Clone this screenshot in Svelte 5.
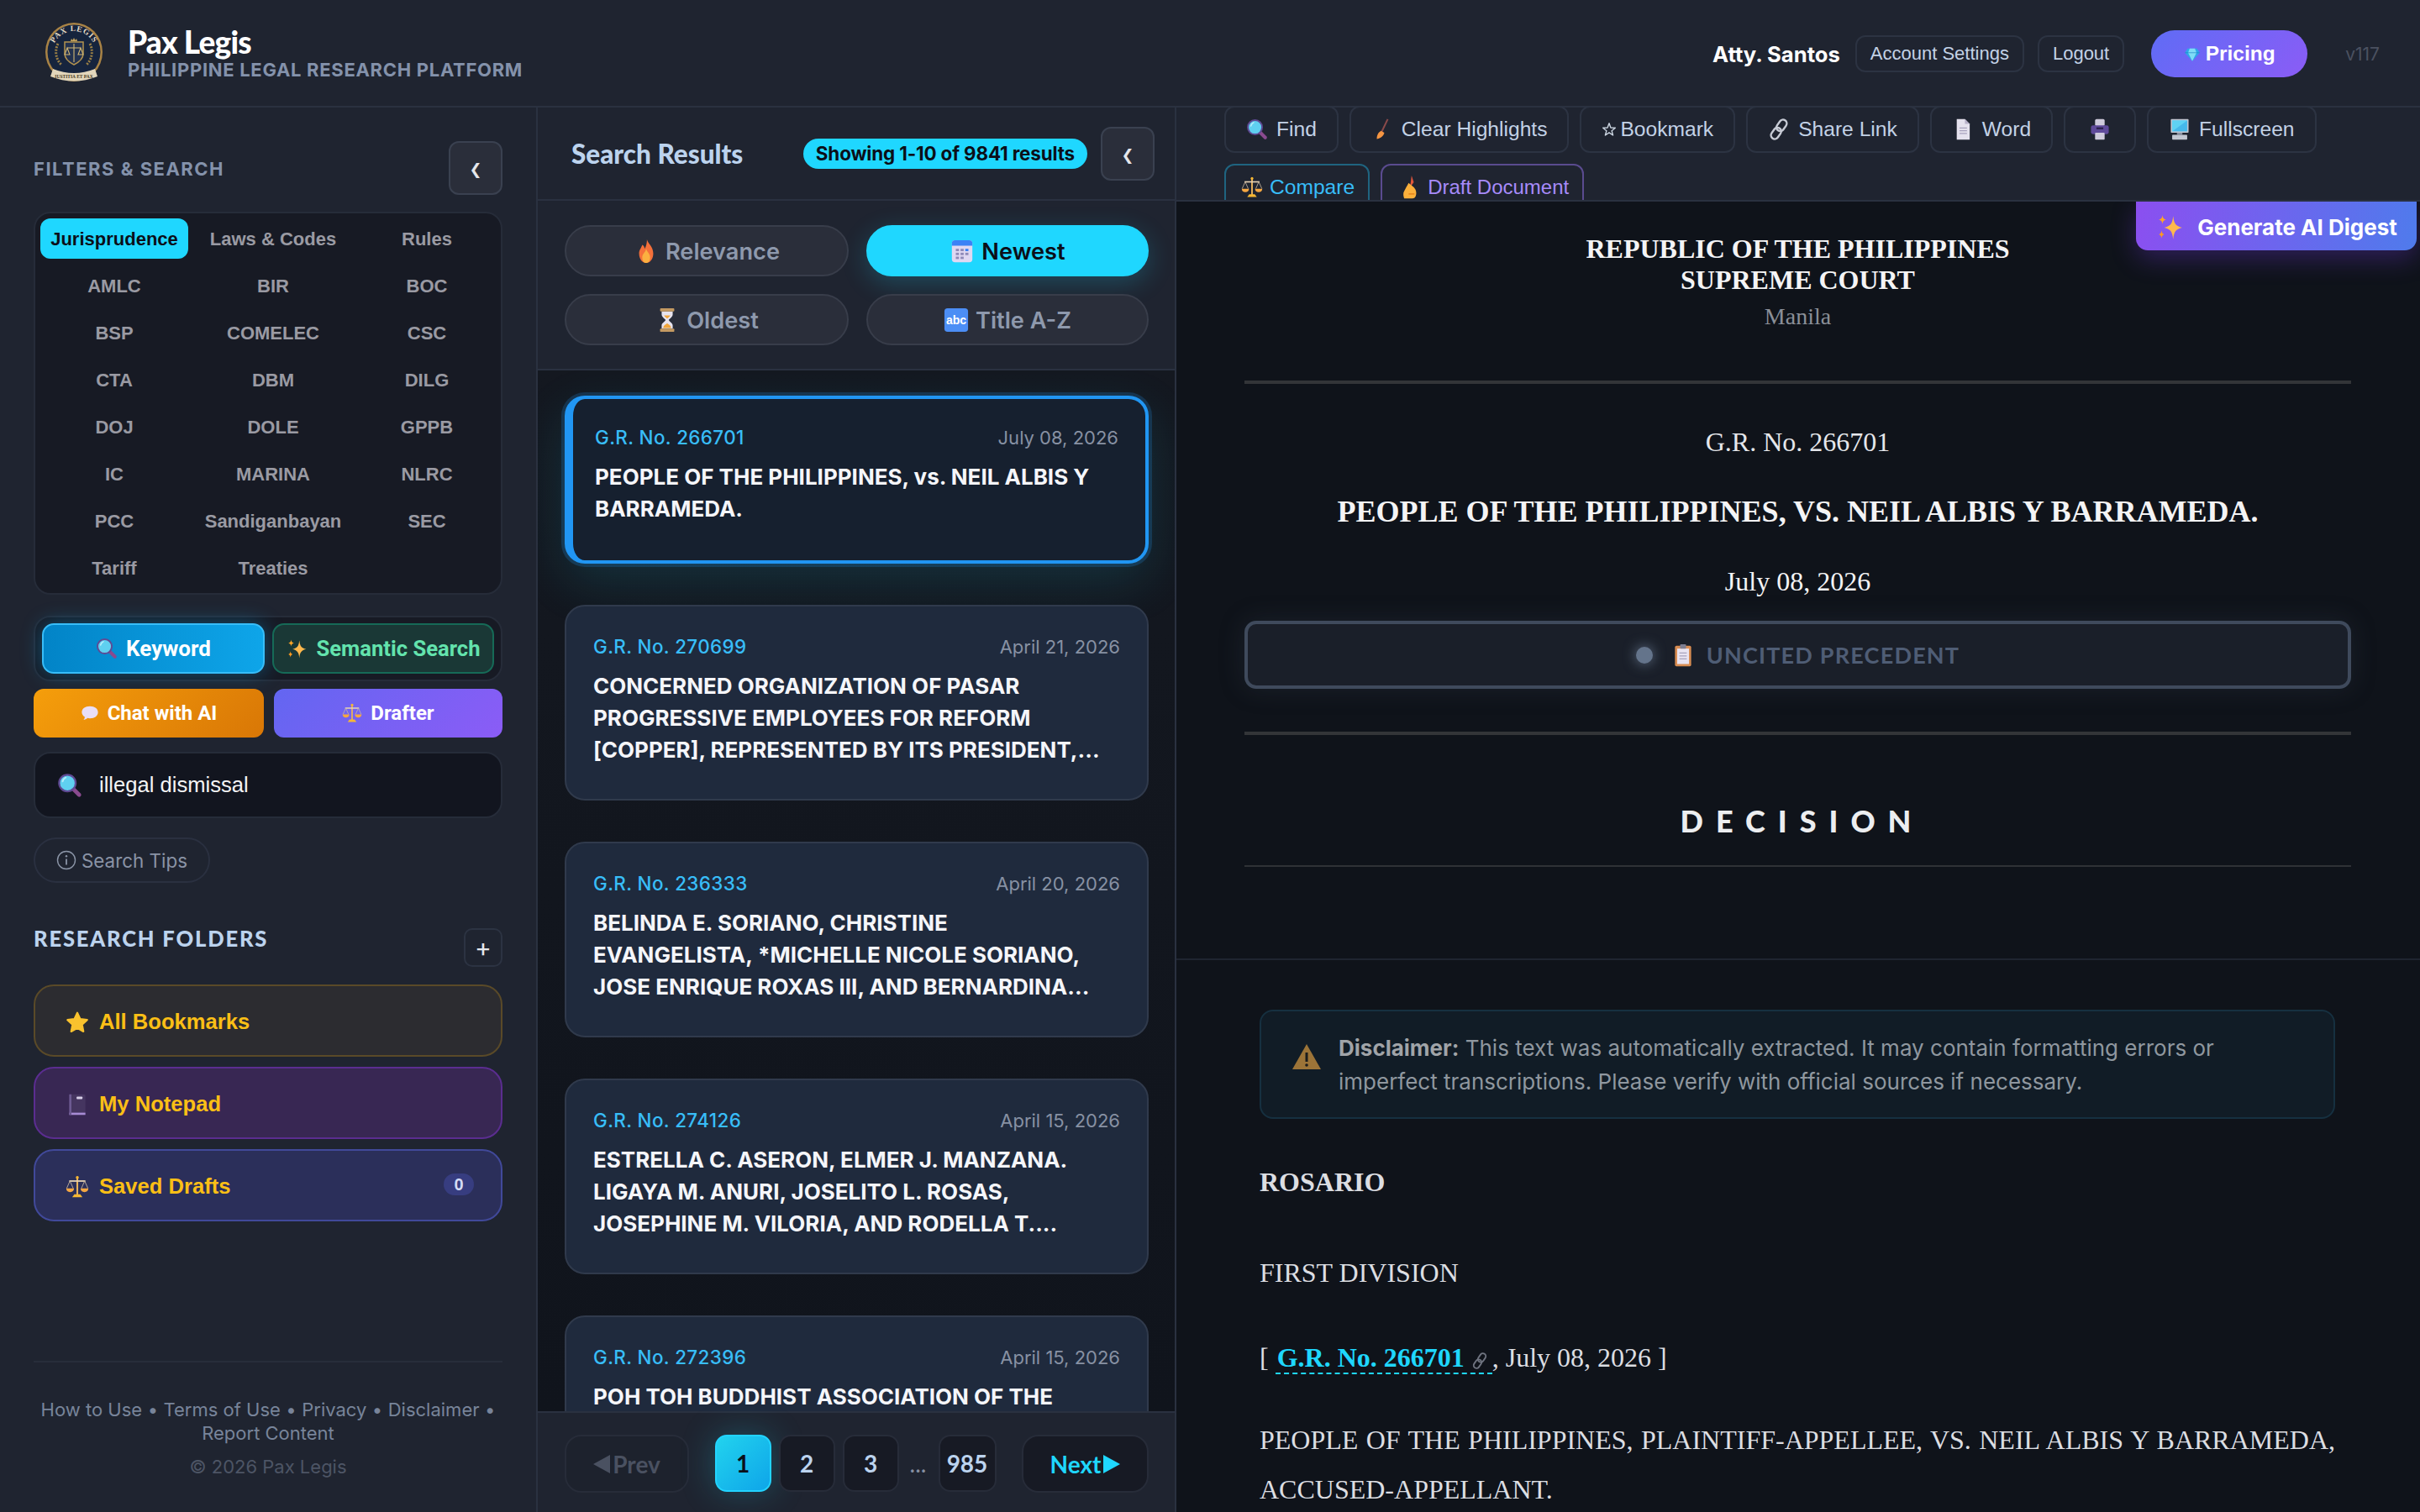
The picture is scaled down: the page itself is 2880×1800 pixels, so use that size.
<script lang="ts">
	const agencies = ['Jurisprudence', 'Laws & Codes', 'Rules', 'AMLC', 'BIR', 'BOC', 'BSP', 'COMELEC', 'CSC', 'CTA', 'DBM', 'DILG', 'DOJ', 'DOLE', 'GPPB', 'IC', 'MARINA', 'NLRC', 'PCC', 'Sandiganbayan', 'SEC', 'Tariff', 'Treaties'];

	const sorts = [
		{ label: 'Relevance', icon: 'flame', active: false },
		{ label: 'Newest', icon: 'calendar', active: true },
		{ label: 'Oldest', icon: 'hourglass', active: false },
		{ label: 'Title A-Z', icon: 'abc', active: false }
	];

	const results = [
		{ no: '266701', date: 'July 08, 2026', title: 'PEOPLE OF THE PHILIPPINES, vs. NEIL ALBIS Y BARRAMEDA.', active: true },
		{ no: '270699', date: 'April 21, 2026', title: 'CONCERNED ORGANIZATION OF PASAR PROGRESSIVE EMPLOYEES FOR REFORM [COPPER], REPRESENTED BY ITS PRESIDENT,...' },
		{ no: '236333', date: 'April 20, 2026', title: 'BELINDA E. SORIANO, CHRISTINE EVANGELISTA,\u00a0*MICHELLE NICOLE SORIANO, JOSE ENRIQUE ROXAS III, AND BERNARDINA...' },
		{ no: '274126', date: 'April 15, 2026', title: 'ESTRELLA C. ASERON, ELMER J. MANZANA. LIGAYA M. ANURI, JOSELITO L. ROSAS, JOSEPHINE M. VILORIA, AND RODELLA T....' },
		{ no: '272396', date: 'April 15, 2026', title: 'POH TOH BUDDHIST ASSOCIATION OF THE' }
	];

	const tools = [
		{ label: 'Find', icon: 'search', size: 26 },
		{ label: 'Clear Highlights', icon: 'broom', size: 26 },
		{ label: 'Bookmark', icon: 'staro', size: 18, kind: 'starred' },
		{ label: 'Share Link', icon: 'link', size: 26 },
		{ label: 'Word', icon: 'doc', size: 26 },
		{ label: '', icon: 'printer', size: 26, kind: 'print' },
		{ label: 'Fullscreen', icon: 'desktop', size: 26 },
		{ label: 'Compare', icon: 'scales', size: 26, kind: 'compare' },
		{ label: 'Draft Document', icon: 'hand', size: 28, kind: 'draft' }
	];
</script>

{#snippet emoji(name: string, size: number)}
	<svg class="emoji" width={size} height={size} viewBox="0 0 32 32" aria-hidden="true">
		{#if name === 'search'}
			<path d="M20 20l8 8" stroke="#8a4a8f" stroke-width="5" stroke-linecap="round" />
			<circle cx="13" cy="13" r="10.500" fill="#5fd0f0" stroke="#5f4a94" stroke-width="2.400" />
			<path d="M7 11a7 7 0 014-5" stroke="#b6ecfa" stroke-width="2" fill="none" stroke-linecap="round" />
		{:else if name === 'sparkle'}
			<path d="M20 4c1 9 3 11 10 13-7 2-9 4-10 13-1-9-3-11-10-13 7-2 9-4 10-13z" fill="#ffb84d" />
			<path d="M8 3c.5 3 1 4 4 5-3 1-3.500 2-4 5-.5-3-1-4-4-5 3-1 3.500-2 4-5z" fill="#ffa726" />
			<path d="M7 20c.5 3 1 3.500 3 4.500-2 1-2.500 1.500-3 4.500-.5-3-1-3.500-3-4.500 2-1 2.500-1.500 3-4.500z" fill="#ff9a1f" />
		{:else if name === 'chat'}
			<path d="M16 4c8.500 0 14 4.500 14 10.500S24.500 25 16 25c-1.500 0-3-.2-4.300-.5C10 26.500 7.500 27.500 5 27.500c1.200-1.300 2-3 2.200-5C4 20.500 2 17.800 2 14.500 2 8.500 7.500 4 16 4z" fill="#e9def7" />
		{:else if name === 'scales'}
			<path d="M16 2v25" stroke="#e8b15c" stroke-width="2.400" />
			<circle cx="16" cy="3" r="2" fill="#f7b733" />
			<path d="M5 8h22" stroke="#e9d4b4" stroke-width="2" />
			<path d="M9 30h14l-3-4h-8z" fill="#f7b733" />
			<path d="M6 8l-4.500 10M6 8l4.500 10M26 8l-4.500 10M26 8l4.500 10" stroke="#cbb9a0" stroke-width="1" />
			<path d="M1 18h10.500c0 3.500-2 5-5.250 5S1 21.500 1 18zM20.500 18H31c0 3.500-2 5-5.250 5s-5.250-1.500-5.250-5z" fill="#f5a742" />
		{:else if name === 'star'}
			<path d="M16 3l4 8.600 9.400 1.200-6.900 6.400 1.800 9.300L16 23.900l-8.300 4.600 1.800-9.300-6.900-6.400 9.400-1.200z" fill="#f9c22e" stroke="#f9c22e" stroke-width="2.500" stroke-linejoin="round" />
		{:else if name === 'note'}
			<rect x="5" y="2" width="22" height="28" rx="2" fill="#453560" />
			<rect x="5" y="27" width="22" height="3" fill="#a78bd4" />
			<rect x="5" y="2" width="3" height="28" fill="#6d5a92" />
			<rect x="15" y="5" width="8" height="3.500" rx="1" fill="#d8cfe8" />
		{:else if name === 'flame'}
			<path d="M17 1c1 5 8 9 8 18 0 7-4 12-9 12S7 26 7 19c0-5 3-7 4-11 2 1 3 3 3 5 2-3 3-7 3-12z" fill="#f4703a" />
			<path d="M16 13c1 4 5 6 5 11 0 4-2 7-5 7s-5-3-5-7c0-5 4-6 5-11z" fill="#fbb040" />
		{:else if name === 'calendar'}
			<rect x="3" y="2" width="26" height="28" rx="4" fill="#dfd8f2" />
			<path d="M3 9V6a4 4 0 014-4h18a4 4 0 014 4v3z" fill="#3b82f6" />
			<g fill="#8f8ab8"><rect x="8" y="13" width="4" height="3" /><rect x="14" y="13" width="4" height="3" /><rect x="8" y="18" width="4" height="3" /><rect x="14" y="18" width="4" height="3" /><rect x="20" y="18" width="4" height="3" /><rect x="8" y="23" width="4" height="3" /><rect x="14" y="23" width="4" height="3" /></g>
			<rect x="20" y="13" width="4" height="3" fill="#3b82f6" />
		{:else if name === 'hourglass'}
			<path d="M9 5h14v4c0 3-4 5-5 7 1 2 5 4 5 7v4H9v-4c0-3 4-5 5-7-1-2-5-4-5-7z" fill="#e7e3ee" />
			<path d="M11 26c0-3 4-5 5-6 1 1 5 3 5 6zM12 10h8c-1 2-3 3-4 4-1-1-3-2-4-4z" fill="#f0a53c" />
			<rect x="7" y="1" width="18" height="4" rx="1" fill="#c49a62" />
			<rect x="7" y="27" width="18" height="4" rx="1" fill="#c49a62" />
		{:else if name === 'abc'}
			<rect x="1" y="1" width="30" height="30" rx="4" fill="#4c8ef5" />
			<text x="16" y="21.500" text-anchor="middle" font-family="Liberation Sans, sans-serif" font-size="15" fill="#fff">abc</text>
		{:else if name === 'broom'}
			<path d="M24 1L15 20" stroke="#8a4a4a" stroke-width="2.500" />
			<path d="M14 18l5 3c-1 4-4 8-11 9 0-6 2-9 6-12z" fill="#f59542" />
		{:else if name === 'staro'}
			<path d="M16 3l3.400 9.600 9.600.4-7.500 6 2.600 9.500L16 23l-8.100 5.500 2.600-9.500-7.500-6 9.600-.4z" fill="none" stroke="#cbd5e1" stroke-width="2.500" stroke-linejoin="round" />
		{:else if name === 'link' || name === 'linksm'}
			<g transform="rotate(-55 16 16)" fill="none" stroke={name === 'link' ? '#c8ccd6' : '#6f7480'} stroke-width="3">
				<rect x="0" y="10.500" width="18" height="11" rx="5.500" />
				<rect x="14" y="10.500" width="18" height="11" rx="5.500" />
			</g>
		{:else if name === 'doc'}
			<path d="M7 1h12l7 7v23H7z" fill="#e5e2ee" />
			<path d="M19 1l7 7h-7z" fill="#b6b0c8" />
			<path d="M11 14h11M11 18h11M11 22h11" stroke="#a8a2bd" stroke-width="1.500" />
		{:else if name === 'printer'}
			<rect x="9" y="1" width="14" height="10" rx="2" fill="#cfcbdc" />
			<rect x="3" y="10" width="26" height="13" rx="3" fill="#5f4a9a" />
			<rect x="9" y="21" width="14" height="10" rx="1" fill="#cfcbdc" />
			<rect x="11" y="13" width="10" height="3" fill="#2d2350" />
		{:else if name === 'desktop'}
			<rect x="3" y="1" width="26" height="20" rx="1" fill="#c2c7d2" />
			<path d="M5 3h22v16H5z" fill="#46b8ea" />
			<path d="M5 3h22L5 19z" fill="#5fd2f3" />
			<rect x="12" y="21" width="8" height="3" fill="#8d93a3" />
			<rect x="5" y="24" width="22" height="7" rx="1" fill="#c2c7d2" />
		{:else if name === 'hand'}
			<path d="M17 0l3 9-5 7z" fill="#e0563b" />
			<path d="M13 10c3 3 9 6 10 11 1 4 0 10-5 10H7c-1-3-2-7 0-10 2-4 4-7 6-11z" fill="#fbb03b" />
			<path d="M13 25h8" stroke="#e88a1f" stroke-width="2" />
		{:else if name === 'diamond'}
			<path d="M7 6h18l5 8-14 16L2 14z" fill="#2ea7e8" />
			<path d="M11 6h10l3 8-8 16-8-16z" fill="#7fdcf7" />
			<path d="M2 14h28" stroke="#1a7fc4" stroke-width="1" />
		{:else if name === 'clip'}
			<rect x="5" y="3" width="22" height="28" rx="2" fill="#d98d52" />
			<rect x="8" y="7" width="16" height="21" fill="#e9e4f2" />
			<rect x="12" y="1" width="8" height="6" rx="1" fill="#7d7d90" />
			<path d="M11 13h10M11 17h10M11 21h10" stroke="#a8a2bd" stroke-width="1.500" />
		{/if}
	</svg>
{/snippet}

<div class="app">
	<header class="topbar">
		<div class="brand">
			<svg class="seal" width="72" height="74" viewBox="0 0 72 74" aria-hidden="true">
				<defs>
					<path id="sealArc" d="M10 37a26 26 0 0152 0" />
				</defs>
				<ellipse cx="36" cy="36" rx="34" ry="35" fill="#a98345" />
				<ellipse cx="36" cy="36" rx="31.500" ry="32.500" fill="#16243d" />
				<text font-family="Liberation Serif, serif" font-size="9.500" fill="#e6dcc5" font-weight="700" letter-spacing="0.8"><textPath href="#sealArc" startOffset="50%" text-anchor="middle">PAX LEGIS</textPath></text>
				<path d="M33 20l1.500 2 1.500-3 1.500 3 1.500-2 1 3H32z" fill="#c7a45c" />
				<path d="M25 24h22v14c0 6-5 10-11 13-6-3-11-7-11-13z" fill="#22314f" stroke="#b2924f" stroke-width="1.500" />
				<path d="M36 26v22M28 31h16M28 31l-3 8h6zM44 31l-3 8h6z" fill="none" stroke="#d1b774" stroke-width="1.100" />
				<path d="M17 26c-4 8-3 18 4 25M55 26c4 8 3 18-4 25" fill="none" stroke="#9c8146" stroke-width="3" stroke-dasharray="2 1.500" />
				<path d="M11 56q25 10 50 0l3 9q-28 11-56 0z" fill="#e2d6bb" />
				<text x="36" y="67" text-anchor="middle" font-family="Liberation Serif, serif" font-size="5.500" font-weight="700" fill="#4a3c22">IUSTITIA ET PAX</text>
			</svg>
			<div class="brand-text">
				<div class="brand-name">Pax Legis</div>
				<div class="brand-sub">PHILIPPINE LEGAL RESEARCH PLATFORM</div>
			</div>
		</div>
		<div class="user">
			<span class="user-name">Atty. Santos</span>
			<button class="ghost">Account Settings</button>
			<button class="ghost">Logout</button>
			<button class="pricing">{@render emoji('diamond', 20)}Pricing</button>
			<span class="version">v117</span>
		</div>
	</header>

	<main class="body">
		<aside class="sidebar">
			<div class="side-head">
				<span class="side-title">FILTERS &amp; SEARCH</span>
				<button class="collapse">❮</button>
			</div>

			<div class="agencies">
				{#each agencies as name, i}
					<button class="agency" class:active={i === 0}>{name}</button>
				{/each}
			</div>

			<div class="modes">
				<button class="mode keyword">{@render emoji('search', 26)}Keyword</button>
				<button class="mode semantic">{@render emoji('sparkle', 26)}Semantic Search</button>
			</div>

			<div class="ai-row">
				<button class="ai chat">{@render emoji('chat', 22)}Chat with AI</button>
				<button class="ai drafter">{@render emoji('scales', 24)}Drafter</button>
			</div>

			<div class="search-box">
				{@render emoji('search', 30)}
				<span>illegal dismissal</span>
			</div>

			<button class="tips">
				<svg width="24" height="24" viewBox="0 0 24 24" aria-hidden="true"><circle cx="12" cy="12" r="10.500" fill="none" stroke="#8b95a7" stroke-width="1.400" /><path d="M12 10.500v7" stroke="#8b95a7" stroke-width="1.800" /><circle cx="12" cy="7.300" r="1.200" fill="#8b95a7" /></svg>
				Search Tips
			</button>

			<div class="folders-head">
				<span class="folders-title">RESEARCH FOLDERS</span>
				<button class="add">+</button>
			</div>

			<div class="folders">
				<button class="folder gold">{@render emoji('star', 28)}All Bookmarks</button>
				<button class="folder purple">{@render emoji('note', 28)}My Notepad</button>
				<button class="folder indigo">{@render emoji('scales', 28)}Saved Drafts<span class="count">0</span></button>
			</div>

			<footer class="side-foot">
				<div class="foot-links">How to Use<i class="sep">•</i>Terms of Use<i class="sep">•</i>Privacy<i class="sep">•</i>Disclaimer<i class="sep">•</i><br />Report Content</div>
				<div class="copy">© 2026 Pax Legis</div>
			</footer>
		</aside>

		<section class="results">
			<div class="results-head">
				<span class="results-title">Search Results</span>
				<span class="badge">Showing 1-10 of 9841 results</span>
				<button class="collapse">❮</button>
			</div>

			<div class="sorts">
				{#each sorts as s}
					<button class="sort" class:active={s.active}>{@render emoji(s.icon, 30)}<span>{s.label}</span></button>
				{/each}
			</div>

			<div class="list">
				{#each results as r}
					<article class="card" class:active={r.active}>
						<div class="card-meta">
							<span class="gr">G.R. No. {r.no}</span>
							<span class="date">{r.date}</span>
						</div>
						<h3>{r.title}</h3>
					</article>
				{/each}
			</div>

			<nav class="pager">
				<button class="page-nav prev"><i class="tri left"></i>Prev</button>
				<div class="pages">
					<button class="page on">1</button>
					<button class="page">2</button>
					<button class="page">3</button>
					<span class="dots">...</span>
					<button class="page wide">985</button>
				</div>
				<button class="page-nav next">Next<i class="tri right"></i></button>
			</nav>
		</section>

		<section class="doc">
			<div class="toolbar">
				<div class="tools">
					{#each tools as t}
						<button class="tool {t.kind ?? ''}">{@render emoji(t.icon, t.size)}{t.label}</button>
					{/each}
				</div>
			</div>

			<div class="doc-scroll">
				<button class="digest">{@render emoji('sparkle', 34)}Generate AI Digest</button>

				<div class="doc-head">
					<div class="republic">REPUBLIC OF THE PHILIPPINES<br />SUPREME COURT</div>
					<div class="manila">Manila</div>
					<hr class="rule thick" />
					<div class="case-no">G.R. No. 266701</div>
					<h1>PEOPLE OF THE PHILIPPINES, VS. NEIL ALBIS Y BARRAMEDA.</h1>
					<div class="case-date">July 08, 2026</div>
					<div class="status">
						<i class="dot"></i>{@render emoji('clip', 28)}<span>UNCITED PRECEDENT</span>
					</div>
					<hr class="rule thick second" />
					<div class="decision">DECISION</div>
					<hr class="rule" />
				</div>

				<div class="doc-body">
					<div class="disclaimer">
						<svg width="36" height="32" viewBox="0 0 36 32" aria-hidden="true"><path d="M18 1L35 31H1z" fill="#9c7438" /><path d="M18 11v11" stroke="#1b1c1c" stroke-width="3" /><circle cx="18" cy="26" r="1.800" fill="#1b1c1c" /></svg>
						<p><b>Disclaimer:</b> This text was automatically extracted. It may contain formatting errors or imperfect transcriptions. Please verify with official sources if necessary.</p>
					</div>
					<p class="para strong">ROSARIO</p>
					<p class="para division">FIRST DIVISION</p>
					<p class="para citation">[ <span class="cite">G.R. No. 266701 {@render emoji('linksm', 20)}</span>, July 08, 2026 ]</p>
					<p class="para parties">PEOPLE OF THE PHILIPPINES, PLAINTIFF-APPELLEE, VS. NEIL ALBIS Y BARRAMEDA, ACCUSED-APPELLANT.</p>
				</div>
			</div>
		</section>
	</main>
</div>

<style>
	:global(body) {
		margin: 0;
		background: #1f2430;
	}

	button {
		font: inherit;
		cursor: pointer;
		background: none;
		border: none;
		color: inherit;
		padding: 0;
	}

	.emoji {
		flex: none;
	}

	.app {
		width: 2880px;
		height: 1800px;
		display: flex;
		flex-direction: column;
		overflow: hidden;
		background: #1f2430;
		color: #e5e7eb;
		font-family: Inter, 'Liberation Sans', sans-serif;
	}

	/* top bar */
	.topbar {
		height: 128px;
		flex: none;
		box-sizing: border-box;
		display: flex;
		align-items: center;
		justify-content: space-between;
		padding: 0 48px 0 52px;
		border-bottom: 2px solid #2a3140;
	}
	.brand {
		display: flex;
		align-items: center;
		gap: 28px;
	}
	.brand-name {
		font-family: Lato, sans-serif;
		font-weight: 900;
		font-size: 37px;
		line-height: 40px;
		color: #fff;
		letter-spacing: -0.8px;
	}
	.brand-sub {
		font-weight: 700;
		font-size: 22px;
		line-height: 26px;
		color: #8492ab;
		letter-spacing: 0.7px;
	}
	.user {
		display: flex;
		align-items: center;
		padding-top: 2px;
	}
	.user-name {
		font-weight: 700;
		font-size: 25.600px;
		color: #fff;
		margin-right: 18px;
	}
	.ghost {
		height: 44px;
		padding: 0 16px;
		border: 2px solid #2c3342;
		border-radius: 12px;
		font-family: 'Liberation Sans', sans-serif;
		font-size: 22px;
		color: #c3d2e6;
		margin-right: 16px;
	}
	.pricing {
		height: 56px;
		width: 186px;
		border-radius: 28px;
		background: linear-gradient(135deg, #5f6cf5, #8b5cf6);
		color: #fff;
		font-family: 'Liberation Sans', sans-serif;
		font-weight: 700;
		font-size: 24.500px;
		display: flex;
		align-items: center;
		justify-content: center;
		gap: 6px;
		margin-left: 16px;
		margin-right: 45px;
	}
	.version {
		font-size: 21px;
		color: #4b5160;
	}

	.body {
		flex: 1;
		min-height: 0;
		display: flex;
	}

	/* sidebar */
	.sidebar {
		width: 640px;
		flex: none;
		box-sizing: border-box;
		border-right: 2px solid #2a3140;
		padding: 40px 40px 0;
		display: flex;
		flex-direction: column;
	}
	.side-head {
		display: flex;
		align-items: center;
		justify-content: space-between;
	}
	.side-title {
		font-weight: 700;
		font-size: 22px;
		letter-spacing: 1.500px;
		color: #8492ab;
		margin-top: 2px;
	}
	.collapse {
		width: 64px;
		height: 64px;
		box-sizing: border-box;
		border: 2px solid #3a4150;
		border-radius: 12px;
		background: #2a2e3a;
		color: #e5e7eb;
		font-family: 'DejaVu Sans', sans-serif;
		font-size: 18px;
		line-height: 1;
		padding-top: 4px;
	}
	.agencies {
		margin-top: 20px;
		box-sizing: border-box;
		height: 456px;
		padding: 6px;
		border: 2px solid #262c39;
		border-radius: 20px;
		background: #171a24;
		display: grid;
		grid-template-columns: 176px 186px 164px;
		grid-auto-rows: 48px;
		gap: 8px;
		justify-content: center;
		font-family: 'Liberation Sans', sans-serif;
	}
	.agency {
		font-size: 22px;
		font-weight: 700;
		color: #9a9aa3;
		border-radius: 12px;
		padding-top: 2px;
	}
	.agency.active {
		background: #1fd7ff;
		color: #0b0f19;
	}
	.modes {
		margin-top: 25px;
		box-sizing: border-box;
		height: 78px;
		padding: 7px 8px;
		border: 2px solid #262c39;
		border-radius: 20px;
		background: #171a24;
		display: flex;
		gap: 9px;
	}
	.mode {
		height: 60px;
		box-sizing: border-box;
		border-radius: 14px;
		font-family: Roboto, sans-serif;
		font-weight: 700;
		font-size: 25.600px;
		display: flex;
		align-items: center;
		justify-content: center;
		gap: 10px;
	}
	.keyword {
		width: 265px;
		background: linear-gradient(90deg, #0284c7, #0ea5e9);
		border: 2px solid #38bdf8;
		color: #fff;
		box-shadow: 0 0 24px rgba(14, 165, 233, 0.4);
		font-size: 26px;
	}
	.semantic {
		width: 264px;
		background: #1a3836;
		border: 2px solid #166a57;
		color: #63e3ad;
	}
	.ai-row {
		margin-top: 9px;
		display: grid;
		grid-template-columns: 274px 272px;
		gap: 12px;
	}
	.ai {
		height: 58px;
		border-radius: 12px;
		color: #fff;
		font-family: Roboto, sans-serif;
		font-weight: 700;
		font-size: 24px;
		display: flex;
		align-items: center;
		justify-content: center;
		gap: 10px;
	}
	.chat {
		background: linear-gradient(135deg, #f59e0b, #d97706);
	}
	.drafter {
		background: linear-gradient(135deg, #6366f1, #8b5cf6);
	}
	.search-box {
		margin-top: 17px;
		height: 79px;
		box-sizing: border-box;
		border: 2px solid #262c39;
		border-radius: 20px;
		background: #12151f;
		display: flex;
		align-items: center;
		gap: 20px;
		padding-left: 26px;
		font-family: 'Liberation Sans', sans-serif;
		font-size: 25.600px;
		color: #f4f4f5;
	}
	.tips {
		margin-top: 23px;
		align-self: flex-start;
		height: 54px;
		width: 210px;
		box-sizing: border-box;
		border: 2px solid #2a3040;
		border-radius: 27px;
		display: flex;
		align-items: center;
		justify-content: center;
		gap: 6px;
		font-size: 22.400px;
		color: #8a93a5;
	}
	.folders-head {
		margin-top: 54px;
		display: flex;
		align-items: flex-start;
		justify-content: space-between;
	}
	.folders-title {
		font-family: Lato, sans-serif;
		font-weight: 900;
		font-size: 25.600px;
		letter-spacing: 1.800px;
		color: #bcd3ee;
		margin-top: -3px;
	}
	.add {
		width: 46px;
		height: 46px;
		box-sizing: border-box;
		border: 2px solid #2c3342;
		border-radius: 10px;
		font-size: 30px;
		line-height: 1;
		color: #e5e7eb;
	}
	.folders {
		margin-top: 21px;
		display: flex;
		flex-direction: column;
		gap: 12px;
	}
	.folder {
		height: 86px;
		box-sizing: border-box;
		border-width: 2px;
		border-style: solid;
		border-radius: 24px;
		padding: 3px 32px 0 36px;
		display: flex;
		align-items: center;
		gap: 12px;
		font-family: 'Liberation Sans', sans-serif;
		font-weight: 700;
		font-size: 25.600px;
		color: #fbbf16;
	}
	.gold {
		background: #2c2c30;
		border-color: #5a4a28;
	}
	.purple {
		background: #382753;
		border-color: #5b2d90;
	}
	.indigo {
		background: #2b2f5a;
		border-color: #41499a;
	}
	.count {
		margin-left: auto;
		margin-top: -6px;
		width: 36px;
		height: 26px;
		border-radius: 13px;
		background: #373d80;
		color: #d5dcf5;
		font-size: 20px;
		line-height: 26px;
		text-align: center;
	}
	.side-foot {
		margin-top: auto;
		padding: 42px 0 40px;
		border-top: 2px solid #272d3a;
		text-align: center;
		font-size: 22px;
		line-height: 28px;
	}
	.foot-links {
		color: #78849a;
		white-space: nowrap;
	}
	.sep {
		font-style: normal;
		margin: 0 6.500px;
	}
	.sep:last-of-type {
		margin-right: 0;
	}
	.copy {
		margin-top: 12px;
		color: #4d5565;
	}

	/* results column */
	.results {
		width: 760px;
		flex: none;
		box-sizing: border-box;
		border-right: 2px solid #2a3140;
		display: flex;
		flex-direction: column;
	}
	.results-head {
		height: 111px;
		flex: none;
		box-sizing: border-box;
		border-bottom: 2px solid #2a3140;
		display: flex;
		align-items: center;
		padding: 0 24px 0 40px;
	}
	.results-title {
		font-family: Lato, sans-serif;
		font-weight: 900;
		font-size: 31.500px;
		color: #bcd3ee;
		margin-right: auto;
	}
	.badge {
		height: 36px;
		line-height: 36px;
		padding: 0 15px;
		border-radius: 18px;
		background: #1fd7ff;
		color: #0b0f19;
		font-weight: 700;
		font-size: 22.400px;
		margin-right: 16px;
		letter-spacing: -0.150px;
	}
	.sorts {
		height: 202px;
		flex: none;
		box-sizing: border-box;
		border-bottom: 2px solid #2a3140;
		padding: 29px 31px 0 32px;
		display: grid;
		grid-template-columns: 338px 336px;
		grid-auto-rows: 61px;
		gap: 21px;
		justify-content: space-between;
	}
	.sort {
		border: 2px solid #383d4a;
		border-radius: 31px;
		background: #2a2e3a;
		color: #8e99ad;
		font-weight: 600;
		font-size: 27.200px;
		display: flex;
		align-items: center;
		justify-content: center;
		gap: 8px;
	}
	.sort span {
		padding-top: 2px;
	}
	.sort.active {
		background: #1fd7ff;
		border-color: #1fd7ff;
		color: #0b0f19;
		box-shadow: 0 8px 30px rgba(31, 215, 255, 0.22);
	}
	.list {
		flex: 1;
		min-height: 0;
		overflow: hidden;
		padding: 30px 31px 0 32px;
		background: linear-gradient(180deg, #141820, #10141c);
		display: flex;
		flex-direction: column;
		gap: 49px;
	}
	.card {
		flex: none;
		box-sizing: border-box;
		min-height: 233px;
		padding: 32px 32px 34px;
		background: #1f2a3d;
		border: 2px solid #303a4c;
		border-radius: 24px;
	}
	.card.active {
		min-height: 200px;
		height: 200px;
		background: #16202f;
		border: 4px solid #2196f3;
		border-left-width: 10px;
		padding: 30px 32px 0 26px;
		box-shadow: 0 0 0 4px rgba(33, 150, 243, 0.2), 0 20px 60px rgba(34, 211, 238, 0.15);
	}
	.card-meta {
		display: flex;
		justify-content: space-between;
		font-size: 22.400px;
		line-height: 30px;
		padding-top: 1px;
	}
	.gr {
		color: #38bdf8;
		font-weight: 500;
		letter-spacing: 0.400px;
	}
	.date {
		color: #8791a3;
		font-size: 22px;
	}
	h3 {
		margin: 13px 0 0;
		font-weight: 700;
		font-size: 26px;
		line-height: 38px;
		color: #f5f6fa;
	}
	.pager {
		height: 120px;
		flex: none;
		box-sizing: border-box;
		border-top: 2px solid #2a3140;
		padding: 26px 31px 0 32px;
		background: #1f2430;
		display: flex;
		align-items: flex-start;
		justify-content: space-between;
		font-family: Lato, sans-serif;
		font-weight: 700;
		font-size: 28px;
		position: relative;
	}
	.pages {
		display: flex;
		align-items: center;
		gap: 9px;
	}
	.page-nav {
		height: 69px;
		box-sizing: border-box;
		border: 2px solid #272c39;
		border-radius: 20px;
		background: #171a24;
		display: flex;
		align-items: center;
		justify-content: center;
		gap: 3px;
	}
	.prev {
		width: 148px;
		background: #1d222d;
		color: #4a5161;
	}
	.next {
		width: 151px;
		color: #1fd7ff;
	}
	.tri {
		display: block;
		width: 0;
		height: 0;
		border-top: 11px solid transparent;
		border-bottom: 11px solid transparent;
	}
	.tri.left {
		border-right: 20px solid #4a5161;
	}
	.tri.right {
		border-left: 20px solid #1fd7ff;
	}
	.page {
		width: 67px;
		height: 68px;
		box-sizing: border-box;
		border: 2px solid #272c39;
		border-radius: 14px;
		background: #171a24;
		color: #bcd3ee;
	}
	.page.wide {
		width: 69px;
		margin-left: 5px;
	}
	.page.on {
		background: linear-gradient(135deg, #22d3ee, #0ea5e9);
		border-color: #22d3ff;
		color: #0b0f19;
		box-shadow: 0 0 40px rgba(34, 211, 238, 0.25);
	}
	.dots {
		color: #8791a3;
		font-weight: 400;
		width: 20px;
		text-align: center;
		margin-left: 4px;
	}

	/* document */
	.doc {
		flex: 1;
		min-width: 0;
		display: flex;
		flex-direction: column;
	}
	.toolbar {
		height: 112px;
		flex: none;
		box-sizing: border-box;
		border-bottom: 2px solid #2a3140;
		overflow: hidden;
		padding-left: 57px;
	}
	.tools {
		margin-top: -2px;
		width: 1320px;
		display: flex;
		flex-wrap: wrap;
		gap: 13px;
		font-family: 'Liberation Sans', sans-serif;
	}
	.tool {
		height: 56px;
		box-sizing: border-box;
		padding: 0 24px;
		border: 2px solid #2c3342;
		border-radius: 12px;
		display: flex;
		align-items: center;
		gap: 10px;
		font-size: 24.600px;
		color: #c3d2e6;
	}
	.tool.starred {
		gap: 4px;
	}
	.tool.print {
		padding: 0 28px;
	}
	.tool.compare {
		color: #38bdf8;
		border-color: #1f6480;
		padding: 0 16px 0 18px;
		gap: 8px;
	}
	.tool.draft {
		color: #a78bfa;
		border-color: #5a4b8f;
		padding: 0 16px 0 20px;
		gap: 6px;
		font-size: 24px;
	}
	.doc-scroll {
		position: relative;
		flex: 1;
		min-height: 0;
		overflow: hidden;
		background: #0f131a;
		font-family: 'Liberation Serif', serif;
	}
	.digest {
		position: absolute;
		top: 0;
		right: 4px;
		width: 334px;
		height: 58px;
		padding-top: 2px;
		border-radius: 0 0 14px 14px;
		background: linear-gradient(100deg, #8b4ff0, #4f7bec);
		box-shadow: 0 10px 30px rgba(124, 58, 237, 0.3);
		font-family: Inter, sans-serif;
		font-weight: 700;
		font-size: 26px;
		color: #fff;
		display: flex;
		align-items: center;
		justify-content: center;
		gap: 16px;
	}
	.doc-head {
		box-sizing: border-box;
		height: 903px;
		padding: 38px 82px 0 81px;
		border-bottom: 2px solid #1f2530;
		text-align: center;
		color: #f4f4f5;
	}
	.republic {
		font-weight: 700;
		font-size: 32px;
		line-height: 37px;
	}
	.manila {
		margin-top: 9px;
		font-size: 28px;
		line-height: 32px;
		color: #8a8f98;
	}
	.rule {
		margin: 0;
		border: none;
		height: 2px;
		background: #2f3236;
	}
	.rule.thick {
		height: 4px;
		margin-top: 60px;
		background: #333538;
	}
	.rule.thick.second {
		margin-top: 51px;
	}
	.case-no {
		margin-top: 50px;
		font-size: 32px;
		line-height: 38px;
		color: #e5e7eb;
	}
	h1 {
		margin: 41px 0 0;
		font-size: 36px;
		line-height: 46px;
		font-weight: 700;
	}
	.case-date {
		margin-top: 41px;
		font-size: 32px;
		line-height: 38px;
	}
	.status {
		margin-top: 28px;
		height: 81px;
		box-sizing: border-box;
		border: 4px solid #3f4a5c;
		border-radius: 14px;
		background: #1a1f29;
		box-shadow: 0 0 30px rgba(63, 74, 92, 0.25);
		display: flex;
		align-items: center;
		justify-content: center;
		gap: 14px;
		font-family: Lato, sans-serif;
		font-weight: 700;
		font-size: 27px;
		letter-spacing: 1.200px;
		color: #4f5d75;
	}
	.dot {
		width: 20px;
		height: 20px;
		border-radius: 50%;
		background: #64748b;
		box-shadow: 0 0 16px #64748b;
		margin-right: 8px;
	}
	.decision {
		margin-top: 80px;
		padding-left: 10px;
		font-family: Lato, sans-serif;
		font-weight: 900;
		font-size: 36px;
		line-height: 44px;
		letter-spacing: 15px;
		color: #eceef0;
	}
	.decision + .rule {
		margin-top: 31px;
	}
	.doc-body {
		padding: 59px 101px 0 99px;
		color: #dcdee2;
	}
	.disclaimer {
		box-sizing: border-box;
		height: 130px;
		border: 2px solid #163040;
		border-radius: 16px;
		background: #111c26;
		display: flex;
		align-items: flex-start;
		gap: 20px;
		padding: 24px 36px;
		font-family: Inter, sans-serif;
		font-size: 26px;
		line-height: 40px;
		color: #8f979f;
	}
	.disclaimer svg {
		flex: none;
		margin-top: 14px;
	}
	.disclaimer p {
		margin: 0;
	}
	.disclaimer b {
		color: #a0a4a8;
	}
	.para {
		margin: 46px 0 0;
		font-size: 32px;
		line-height: 59px;
		text-align: justify;
	}
	.para.strong {
		font-weight: 700;
	}
	.para.division {
		margin-top: 49px;
	}
	.para.citation {
		margin-top: 42px;
	}
	.para.parties {
		margin-top: 39px;
	}
	.cite {
		color: #1fd7ff;
		font-weight: 700;
		padding: 0 5px 0 2px;
		border-bottom: 2px dashed #1fd7ff;
	}
	.cite .emoji {
		vertical-align: -3px;
	}
</style>
